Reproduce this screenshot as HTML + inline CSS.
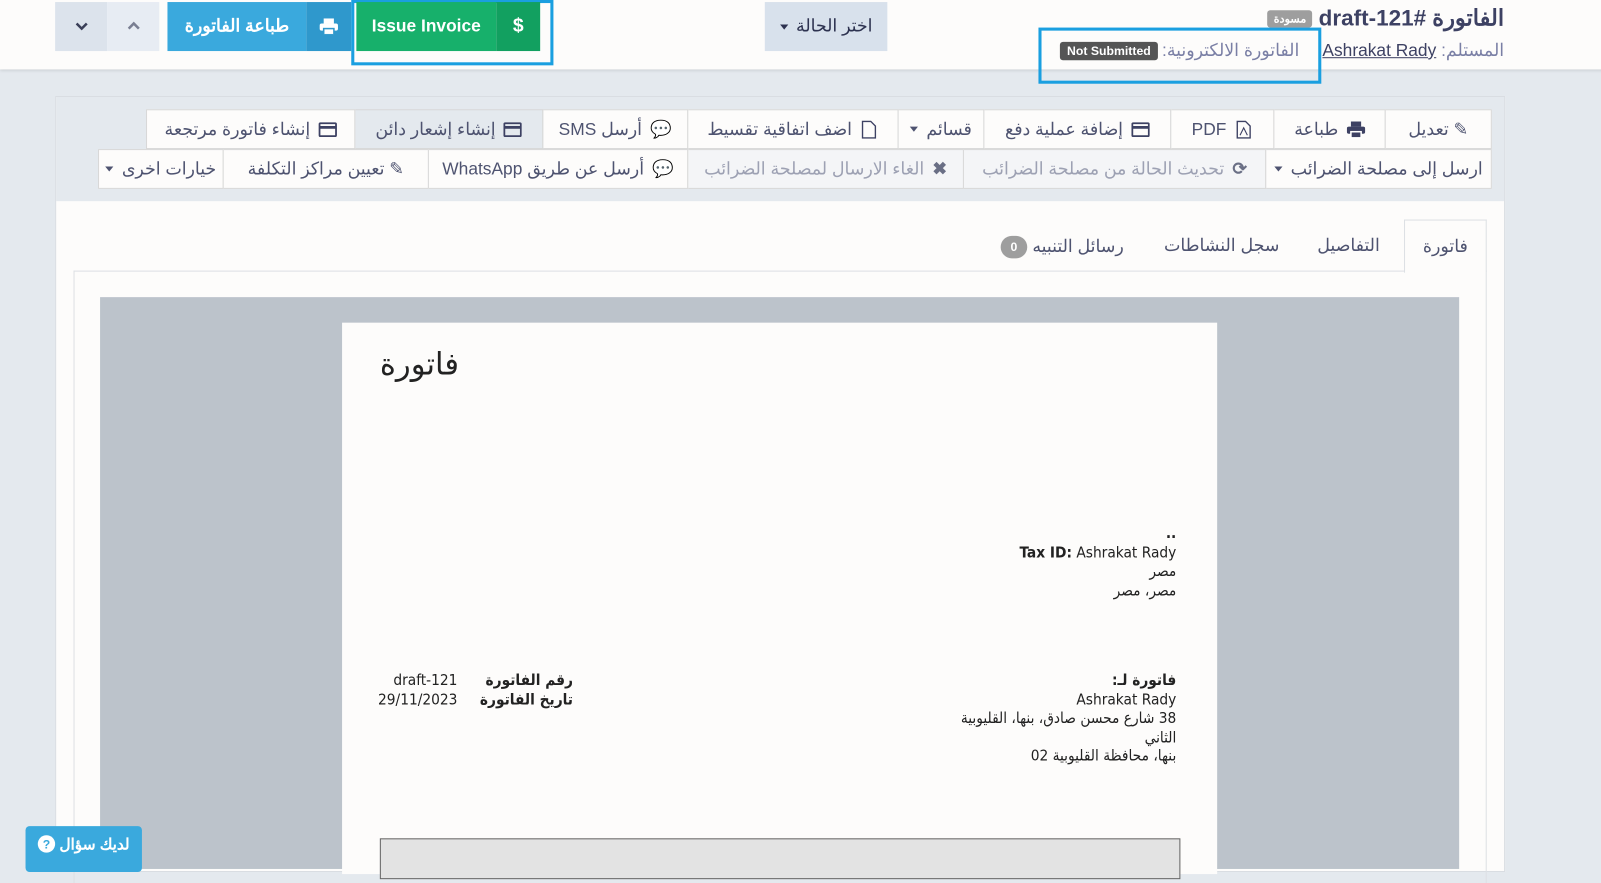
<!DOCTYPE html>
<html><head><meta charset="utf-8">
<style>
*{box-sizing:border-box;margin:0;padding:0}
body{width:1601px;height:849px;overflow:hidden;background:#e4e9ee;font-family:"Liberation Sans","Noto Sans CJK SC",sans-serif;position:relative;color:#4e5370}
#w{position:absolute;left:0;top:0;width:1568px;height:832px;transform:scale(1.0211);transform-origin:0 0}
.a{position:absolute}
.hdr{left:0;top:0;width:1601px;height:68px;background:#fdfcfb;box-shadow:0 1px 3px rgba(0,0,0,.12)}
.btn{position:absolute;display:flex;align-items:center;justify-content:center;font-size:17px;white-space:nowrap;gap:8px;direction:rtl}
.tb{position:absolute;height:39px;background:#fdfcfb;border:1px solid #d8d8d8;display:flex;align-items:center;justify-content:center;gap:8px;font-size:17px;direction:rtl;color:#4e5370;white-space:nowrap}
.dis{background:#f4f5f7;color:#9da1b3}
.ic{width:18px;height:18px;display:inline-block}
.car{display:inline-block;width:0;height:0;border-left:4px solid transparent;border-right:4px solid transparent;border-top:5px solid currentColor}
.pt{font-size:15px;line-height:18.5px;color:#222;font-family:'DejaVu Sans Condensed','DejaVu Sans',sans-serif}
</style></head><body><div id="w">
<div class="a hdr"></div>
<div class="btn" style="left:54px;top:2px;width:51px;height:48px;background:#dce3ec;color:#3a3f58"><svg width="12" height="10" viewBox="0 0 12 10"><path d="M1 2l5 5 5-5" stroke="#3a3f58" stroke-width="2.5" fill="none"/></svg></div>
<div class="btn" style="left:105px;top:2px;width:51px;height:48px;background:#e7ecf3"><svg width="12" height="10" viewBox="0 0 12 10"><path d="M1 7l5-5 5 5" stroke="#7a7f92" stroke-width="2.5" fill="none"/></svg></div>
<div class="btn" style="left:164px;top:2px;width:136px;height:48px;background:#3aa9dd;color:#fff;font-weight:bold">طباعة الفاتورة</div>
<div class="btn" style="left:300px;top:2px;width:44px;height:48px;background:#2f98cc"><svg width="18" height="16" viewBox="0 0 18 16"><rect x="4" y="0" width="10" height="5" fill="#fff"/><rect x="0" y="5" width="18" height="7" rx="2" fill="#fff"/><rect x="4" y="10" width="10" height="6" fill="#fff" stroke="#2f98cc" stroke-width="1.5"/></svg></div>
<div class="a" style="left:344px;top:0;width:198px;height:64px;border:3px solid #1a9fe0"></div>
<div class="btn" style="left:349px;top:2px;width:137px;height:48px;background:#17b06b;color:#fff;font-weight:bold;font-size:17px">Issue Invoice</div>
<div class="btn" style="left:486px;top:2px;width:43px;height:48px;background:#12a060;color:#fff;font-weight:bold;font-size:19px">$</div>
<div class="btn" style="left:749px;top:2px;width:120px;height:48px;background:#d8e1ec;color:#2d3250"><span>اختر الحالة</span><span class="car" style="color:#2d3250"></span></div>
<div class="a" style="right:95px;top:5px;direction:rtl;display:flex;align-items:center;gap:6px"><span style="font-size:22px;font-weight:bold;color:#3d4163">الفاتورة #draft-121</span><span style="background:#9e9e9e;color:#fff;font-size:11px;font-weight:bold;padding:2px 6px;border-radius:3px">مسودة</span></div>
<div class="a" style="right:95px;top:40px;direction:rtl;font-size:17px;color:#7a7fa5">المستلم: <span style="color:#3d4163;text-decoration:underline">Ashrakat Rady</span></div>
<div class="a" style="left:1017px;top:27px;width:277px;height:55px;border:3px solid #1a9fe0"></div>
<div class="a" style="left:1038px;top:40px;direction:rtl;display:flex;align-items:center;gap:4px;font-size:17px;color:#7a7fa5"><span>الفاتورة الالكترونية:</span><span style="background:#555;color:#fff;font-size:12px;font-weight:bold;padding:2px 7px;border-radius:3px">Not Submitted</span></div>
<div class="a" style="left:54px;top:94px;width:1420px;height:760px;background:#fdfcfb;border:1px solid #d9dde2"></div>
<div class="a" style="left:55px;top:95px;width:1418px;height:102px;background:#e4e9ee"></div>
<div class="tb" style="left:1356px;top:107px;width:105px">✎ تعديل</div>
<div class="tb" style="left:1247px;top:107px;width:110px"><svg class="ic" viewBox="0 0 18 16"><rect x="4" y="0" width="10" height="5" fill="#3d4163"/><rect x="0" y="5" width="18" height="7" rx="2" fill="#3d4163"/><rect x="4" y="10" width="10" height="6" fill="#3d4163" stroke="#fff" stroke-width="1.5"/></svg>طباعة</div>
<div class="tb" style="left:1146px;top:107px;width:102px"><svg class="ic" viewBox="0 0 16 20"><path d="M1 1h9l5 5v13H1z" fill="none" stroke="#3d4163" stroke-width="1.5"/><path d="M4 16l4-8 4 8" fill="none" stroke="#3d4163" stroke-width="1.2"/></svg>PDF</div>
<div class="tb" style="left:963px;top:107px;width:184px"><svg class="ic" viewBox="0 0 20 16"><rect x="1" y="1" width="18" height="14" rx="1" fill="none" stroke="#3d4163" stroke-width="2"/><rect x="1" y="4" width="18" height="3" fill="#3d4163"/></svg>إضافة عملية دفع</div>
<div class="tb" style="left:879px;top:107px;width:85px">قسائم <span class="car"></span></div>
<div class="tb" style="left:673px;top:107px;width:207px"><svg class="ic" viewBox="0 0 16 20"><path d="M1 1h9l5 5v13H1z" fill="none" stroke="#3d4163" stroke-width="1.5"/></svg>اضف اتفاقية تقسيط</div>
<div class="tb" style="left:531px;top:107px;width:143px"><span>💬</span>أرسل SMS</div>
<div class="tb" style="left:347px;top:107px;width:185px;background:#e4e9ee"><svg class="ic" viewBox="0 0 20 16"><rect x="1" y="1" width="18" height="14" rx="1" fill="none" stroke="#3d4163" stroke-width="2"/><rect x="1" y="4" width="18" height="3" fill="#3d4163"/></svg>إنشاء إشعار دائن</div>
<div class="tb" style="left:143px;top:107px;width:205px"><svg class="ic" viewBox="0 0 20 16"><rect x="1" y="1" width="18" height="14" rx="1" fill="none" stroke="#3d4163" stroke-width="2"/><rect x="1" y="4" width="18" height="3" fill="#3d4163"/></svg>إنشاء فاتورة مرتجعة</div>
<div class="tb" style="left:1239px;top:146px;width:222px">ارسل إلى مصلحة الضرائب <span class="car"></span></div>
<div class="tb dis" style="left:943px;top:146px;width:297px"><span style="color:#6a6f85;font-weight:bold">⟳</span>تحديث الحالة من مصلحة الضرائب</div>
<div class="tb dis" style="left:673px;top:146px;width:271px"><span style="color:#6a6f85;font-weight:bold">✖</span>الغاء الارسال لمصلحة الضرائب</div>
<div class="tb" style="left:419px;top:146px;width:255px"><span>💬</span>أرسل عن طريق WhatsApp</div>
<div class="tb" style="left:218px;top:146px;width:202px">✎ تعيين مراكز التكلفة</div>
<div class="tb" style="left:96px;top:146px;width:123px">خيارات اخرى <span class="car"></span></div>
<div class="a" style="left:72px;top:265px;width:1384px;height:600px;border-left:1px solid #dde0e4;border-right:1px solid #dde0e4;border-top:1px solid #dde0e4"></div>
<div class="a" style="left:1375px;top:215px;width:81px;height:52px;background:#fdfcfb;border:1px solid #dde0e4;border-bottom:none;font-size:17px;display:flex;align-items:center;justify-content:center;color:#4e5370">فاتورة</div>
<div class="a" style="left:1290px;top:231px;font-size:17px">التفاصيل</div>
<div class="a" style="left:1140px;top:231px;font-size:17px">سجل النشاطات</div>
<div class="a" style="left:980px;top:231px;font-size:17px;direction:rtl;display:flex;gap:5px;align-items:center">رسائل التنبيه <span style="background:#9e9e9e;color:#fff;font-size:12px;font-weight:bold;width:26px;height:22px;border-radius:11px;display:inline-flex;align-items:center;justify-content:center">0</span></div>
<div class="a" style="left:98px;top:291px;width:1331px;height:560px;background:#bcc3cb"></div>
<div class="a" style="left:335px;top:316px;width:857px;height:540px;background:#fdfcfb"></div>
<div class="a" style="left:372px;top:340px;font-size:30px;color:#222;font-family:'DejaVu Sans',sans-serif">فاتورة</div>
<div class="a pt" style="right:416px;top:513px;direction:rtl;text-align:right">
<div style="font-weight:bold">..</div><div style="direction:ltr"><b>Tax ID:</b> Ashrakat Rady</div><div>مصر</div><div>مصر، مصر</div></div>
<div class="a pt" style="right:416px;top:657px;direction:rtl;text-align:right">
<div style="font-weight:bold">فاتورة لـ:</div><div>Ashrakat Rady</div><div>38 شارع محسن صادق، بنها، القليوبية</div><div>الثاني</div><div>بنها، محافظة القليوبية 02</div></div>
<div class="a pt" style="left:470px;top:657px;font-weight:bold;direction:rtl">رقم الفاتورة<br>تاريخ الفاتورة</div>
<div class="a pt" style="left:362px;top:657px;width:86px;text-align:right">draft-121<br>29/11/2023</div>
<div class="a" style="left:372px;top:821px;width:784px;height:40px;background:#e3e3e3;border:1px solid #666"></div>
<div class="a" style="left:25px;top:809px;width:114px;height:45px;background:#3aa9dd;border-radius:4px;color:#fff;font-weight:bold;font-size:15px;direction:rtl;display:flex;gap:4px;justify-content:center;padding-top:9px">لديك سؤال <span style="display:inline-flex;width:17px;height:17px;border-radius:50%;background:#fff;color:#3aa9dd;font-size:12px;align-items:center;justify-content:center">?</span></div>
</div></body></html>
